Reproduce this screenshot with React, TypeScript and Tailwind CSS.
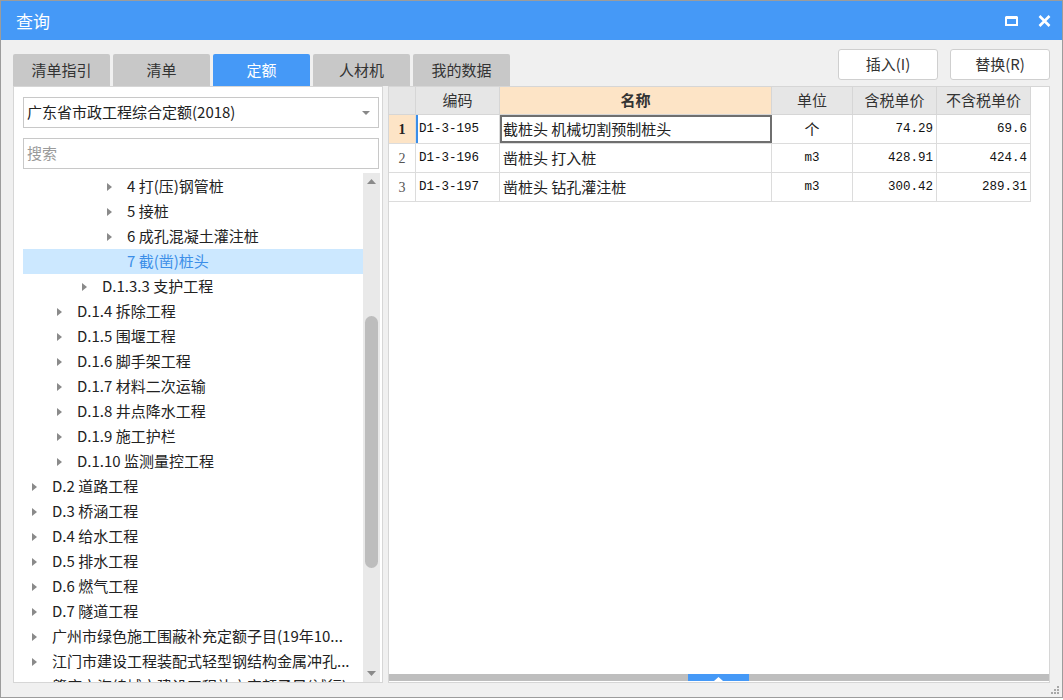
import React from "react";

type TreeItem = {
  label: string;
  level: number;
  arrow: boolean;
  selected?: boolean;
};

const treeItems: TreeItem[] = [
  { label: "4 打(压)钢管桩", level: 3, arrow: true },
  { label: "5 接桩", level: 3, arrow: true },
  { label: "6 成孔混凝土灌注桩", level: 3, arrow: true },
  { label: "7 截(凿)桩头", level: 3, arrow: false, selected: true },
  { label: "D.1.3.3 支护工程", level: 2, arrow: true },
  { label: "D.1.4 拆除工程", level: 1, arrow: true },
  { label: "D.1.5 围堰工程", level: 1, arrow: true },
  { label: "D.1.6 脚手架工程", level: 1, arrow: true },
  { label: "D.1.7 材料二次运输", level: 1, arrow: true },
  { label: "D.1.8 井点降水工程", level: 1, arrow: true },
  { label: "D.1.9 施工护栏", level: 1, arrow: true },
  { label: "D.1.10 监测量控工程", level: 1, arrow: true },
  { label: "D.2 道路工程", level: 0, arrow: true },
  { label: "D.3 桥涵工程", level: 0, arrow: true },
  { label: "D.4 给水工程", level: 0, arrow: true },
  { label: "D.5 排水工程", level: 0, arrow: true },
  { label: "D.6 燃气工程", level: 0, arrow: true },
  { label: "D.7 隧道工程", level: 0, arrow: true },
  { label: "广州市绿色施工围蔽补充定额子目(19年10...", level: 0, arrow: true },
  { label: "江门市建设工程装配式轻型钢结构金属冲孔...", level: 0, arrow: true },
  { label: "肇庆市海绵城市建设工程补充定额子目(试行)", level: 0, arrow: true },
];

// indent per level, written out so tailwind picks them up
const indent = ["pl-[9px]", "pl-[34px]", "pl-[59px]", "pl-[84px]"];

const rows = [
  { no: "1", code: "D1-3-195", name: "截桩头 机械切割预制桩头", unit: "个", tax: "74.29", notax: "69.6" },
  { no: "2", code: "D1-3-196", name: "凿桩头 打入桩", unit: "m3", tax: "428.91", notax: "424.4" },
  { no: "3", code: "D1-3-197", name: "凿桩头 钻孔灌注桩", unit: "m3", tax: "300.42", notax: "289.31" },
];

const tabs = ["清单指引", "清单", "定额", "人材机", "我的数据"];

function Arrow() {
  return (
    <svg width="5" height="8" viewBox="0 0 5 8" className="shrink-0">
      <path d="M0 0 L5 4 L0 8 Z" fill="#8a8a8a" />
    </svg>
  );
}

export default function App() {
  return (
    <div className="relative h-[698px] w-[1063px] border border-[#9c9c9c] bg-[#f0f0f0] font-['Noto_Sans_CJK_SC',sans-serif] text-[#222]">
      {/* title bar */}
      <div className="flex h-[39px] items-center justify-between bg-[#4599f7] pl-[15px] pr-[11px]">
        <span className="text-[17px] text-white">查询</span>
        <div className="flex items-center gap-[20px]">
          <svg width="13" height="10" viewBox="0 0 13 10">
            <path d="M1 1.5 H12 V9 H1 Z" fill="none" stroke="white" strokeWidth="2" />
            <path d="M1 1.5 H12" stroke="white" strokeWidth="3" />
          </svg>
          <svg width="13" height="12" viewBox="0 0 13 12">
            <path d="M1.5 1 L11.5 11 M11.5 1 L1.5 11" stroke="white" strokeWidth="2.6" />
          </svg>
        </div>
      </div>

      <div className="flex flex-col px-[12px]">
        {/* tabs + buttons */}
        <div className="flex h-[46px] justify-between">
          <div className="flex gap-[3px] self-end">
            {tabs.map((t) => (
              <div
                key={t}
                className={
                  t === "定额"
                    ? "flex h-[32px] w-[97px] items-center justify-center rounded-t-[2px] bg-[#4599f7] text-[15px] text-white"
                    : "flex h-[32px] w-[97px] items-center justify-center rounded-t-[2px] bg-[#c8c8c8] text-[15px] text-[#333]"
                }
              >
                {t}
              </div>
            ))}
          </div>
          <div className="mt-[9px] flex gap-[12px] self-start">
            <button className="h-[31px] w-[100px] rounded-[3px] border border-[#cfcfcf] bg-white text-[15px] text-[#333]">
              插入(I)
            </button>
            <button className="h-[31px] w-[100px] rounded-[3px] border border-[#cfcfcf] bg-white text-[15px] text-[#333]">
              替换(R)
            </button>
          </div>
        </div>

        {/* main */}
        <div className="flex h-[597px] gap-[5px]">
          {/* left panel */}
          <div className="flex w-[370px] flex-col border border-[#d6d6d6] bg-white pl-[9px] pr-[2px] pt-[10px]">
            <div className="mr-[1px] flex h-[31px] items-center justify-between border border-[#c8c8c8] pl-[3px] pr-[8px]">
              <span className="text-[15px] text-[#222]">广东省市政工程综合定额(2018)</span>
              <svg width="8" height="4" viewBox="0 0 8 4">
                <path d="M0 0 H8 L4 4 Z" fill="#888" />
              </svg>
            </div>
            <div className="mr-[1px] mt-[10px] flex h-[31px] items-center border border-[#c8c8c8] pl-[3px]">
              <span className="text-[15px] text-[#9a9a9a]">搜索</span>
            </div>
            <div className="mt-[4px] flex min-h-0 flex-1">
              <div className="flex-1 overflow-hidden pt-[1px]">
                {treeItems.map((item) => (
                  <div
                    key={item.label}
                    className={
                      "flex h-[25px] items-center gap-[15px] whitespace-nowrap text-[15px] " +
                      indent[item.level] +
                      (item.selected ? " bg-[#cce8ff] text-[#3b8ee8]" : " text-[#222]")
                    }
                  >
                    {item.arrow ? <Arrow /> : <span className="w-[5px] shrink-0" />}
                    <span>{item.label}</span>
                  </div>
                ))}
              </div>
              {/* vertical scrollbar */}
              <div className="flex w-[17px] flex-col bg-[#e9e9e9]">
                <div className="flex h-[17px] items-center justify-center">
                  <svg width="9" height="5" viewBox="0 0 9 5">
                    <path d="M0 5 L4.5 0 L9 5 Z" fill="#8a8a8a" />
                  </svg>
                </div>
                <div className="mx-[2px] mt-[126px] h-[252px] rounded-full bg-[#bdbdbd]" />
                <div className="flex-1" />
                <div className="flex h-[17px] items-center justify-center">
                  <svg width="9" height="5" viewBox="0 0 9 5">
                    <path d="M0 0 L9 0 L4.5 5 Z" fill="#8a8a8a" />
                  </svg>
                </div>
              </div>
            </div>
          </div>

          {/* right panel */}
          <div className="flex flex-1 flex-col border border-[#d6d6d6] bg-white">
            <div className="w-[642px]">
              <div className="flex h-[28px] border-b border-[#d6d6d6] text-[15px] text-[#333]">
                <div className="w-[27px] border-r border-[#d6d6d6] bg-[#e6e6e6]" />
                <div className="flex w-[84px] items-center justify-center border-r border-[#d6d6d6] bg-[#e6e6e6]">编码</div>
                <div className="flex w-[272px] items-center justify-center border-r border-[#d6d6d6] bg-[#fde4c6] font-bold">名称</div>
                <div className="flex w-[81px] items-center justify-center border-r border-[#d6d6d6] bg-[#e6e6e6]">单位</div>
                <div className="flex w-[84px] items-center justify-center border-r border-[#d6d6d6] bg-[#e6e6e6]">含税单价</div>
                <div className="flex w-[94px] items-center justify-center border-r border-[#d6d6d6] bg-[#e6e6e6]">不含税单价</div>
              </div>
              {rows.map((r) => {
                const first = r.no === "1";
                return (
                  <div key={r.no} className="flex h-[29px] border-b border-[#dcdcdc]">
                    <div
                      className={
                        first
                          ? "flex w-[27px] items-center justify-center border-r border-[#dcdcdc] bg-[#fde4c6] font-['Liberation_Serif',serif] text-[14px] font-bold text-[#222]"
                          : "flex w-[27px] items-center justify-center border-r border-[#dcdcdc] font-['Liberation_Serif',serif] text-[14px] text-[#555]"
                      }
                    >
                      {r.no}
                    </div>
                    <div
                      className={
                        first
                          ? "flex w-[84px] items-center border-l-2 border-r border-l-[#3b8ee8] border-r-[#dcdcdc] pl-[1px] font-['Liberation_Mono',monospace] text-[12.5px] text-[#111]"
                          : "flex w-[84px] items-center border-r border-[#dcdcdc] pl-[3px] font-['Liberation_Mono',monospace] text-[12.5px] text-[#111]"
                      }
                    >
                      {r.code}
                    </div>
                    <div
                      className={
                        first
                          ? "flex w-[272px] items-center border-r border-[#dcdcdc] pl-[3px] text-[15px] text-[#222] outline-2 -outline-offset-2 outline-[#6f6f6f]"
                          : "flex w-[272px] items-center border-r border-[#dcdcdc] pl-[3px] text-[15px] text-[#222]"
                      }
                    >
                      {r.name}
                    </div>
                    <div
                      className={
                        r.unit === "个"
                          ? "flex w-[81px] items-center justify-center border-r border-[#dcdcdc] text-[15px] text-[#222]"
                          : "flex w-[81px] items-center justify-center border-r border-[#dcdcdc] font-['Liberation_Mono',monospace] text-[12.5px] text-[#111]"
                      }
                    >
                      {r.unit}
                    </div>
                    <div className="flex w-[84px] items-center justify-end border-r border-[#dcdcdc] pr-[3px] font-['Liberation_Mono',monospace] text-[12.5px] text-[#111]">
                      {r.tax}
                    </div>
                    <div className="flex w-[94px] items-center justify-end border-r border-[#dcdcdc] pr-[3px] font-['Liberation_Mono',monospace] text-[12.5px] text-[#111]">
                      {r.notax}
                    </div>
                  </div>
                );
              })}
            </div>
            <div className="flex-1" />
            {/* horizontal scrollbar */}
            <div className="mb-[1px] flex h-[7px] bg-[#bebebe]">
              <div className="w-[299px]" />
              <div className="flex w-[61px] items-end justify-center bg-[#4599f7]">
                <svg width="9" height="4" viewBox="0 0 9 4">
                  <path d="M0 4 L4.5 0 L9 4 Z" fill="white" />
                </svg>
              </div>
            </div>
          </div>
        </div>
      </div>

      {/* resize grip */}
      <svg width="10" height="10" viewBox="0 0 10 10" className="absolute bottom-[2px] right-[2px]">
        <rect x="7" y="1" width="2" height="2" fill="#a8a8a8" />
        <rect x="4" y="4" width="2" height="2" fill="#a8a8a8" />
        <rect x="7" y="4" width="2" height="2" fill="#a8a8a8" />
        <rect x="1" y="7" width="2" height="2" fill="#a8a8a8" />
        <rect x="4" y="7" width="2" height="2" fill="#a8a8a8" />
        <rect x="7" y="7" width="2" height="2" fill="#a8a8a8" />
      </svg>
    </div>
  );
}
